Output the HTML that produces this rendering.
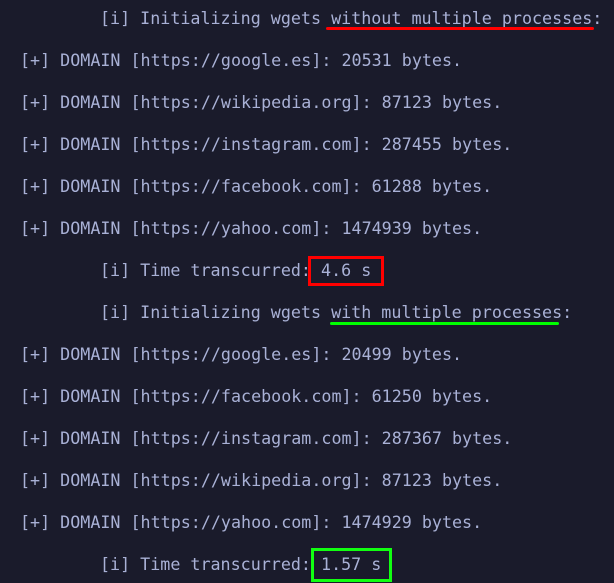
<!DOCTYPE html>
<html><head><style>
html,body{margin:0;padding:0;}
body{width:614px;height:583px;background:#1a1b2b;position:relative;overflow:hidden;font-family:"DejaVu Sans Mono","Liberation Mono",monospace;font-size:16.7px;color:#a9b1d6;}
.l{position:absolute;white-space:pre;line-height:20px;}
.b{position:absolute;}
</style></head><body>
<div class="l" style="left:100px;top:8px">[i] Initializing wgets without multiple processes:</div>
<div class="l" style="left:20px;top:50px">[+] DOMAIN [https://google.es]: 20531 bytes.</div>
<div class="l" style="left:20px;top:92px">[+] DOMAIN [https://wikipedia.org]: 87123 bytes.</div>
<div class="l" style="left:20px;top:134px">[+] DOMAIN [https://instagram.com]: 287455 bytes.</div>
<div class="l" style="left:20px;top:176px">[+] DOMAIN [https://facebook.com]: 61288 bytes.</div>
<div class="l" style="left:20px;top:218px">[+] DOMAIN [https://yahoo.com]: 1474939 bytes.</div>
<div class="l" style="left:100px;top:260px">[i] Time transcurred: 4.6 s</div>
<div class="l" style="left:100px;top:302px">[i] Initializing wgets with multiple processes:</div>
<div class="l" style="left:20px;top:344px">[+] DOMAIN [https://google.es]: 20499 bytes.</div>
<div class="l" style="left:20px;top:386px">[+] DOMAIN [https://facebook.com]: 61250 bytes.</div>
<div class="l" style="left:20px;top:428px">[+] DOMAIN [https://instagram.com]: 287367 bytes.</div>
<div class="l" style="left:20px;top:470px">[+] DOMAIN [https://wikipedia.org]: 87123 bytes.</div>
<div class="l" style="left:20px;top:512px">[+] DOMAIN [https://yahoo.com]: 1474929 bytes.</div>
<div class="l" style="left:100px;top:554px">[i] Time transcurred: 1.57 s</div>
<div class="b" style="left:326px;top:27px;width:268px;height:3px;background:#f00;border-radius:2px"></div>
<div class="b" style="left:308px;top:256px;width:70px;height:24px;border:3px solid #f00"></div>
<div class="b" style="left:330px;top:322px;width:229px;height:3px;background:#0f0;border-radius:2px"></div>
<div class="b" style="left:311px;top:548px;width:75px;height:28px;border:3px solid #1f1"></div>
</body></html>
